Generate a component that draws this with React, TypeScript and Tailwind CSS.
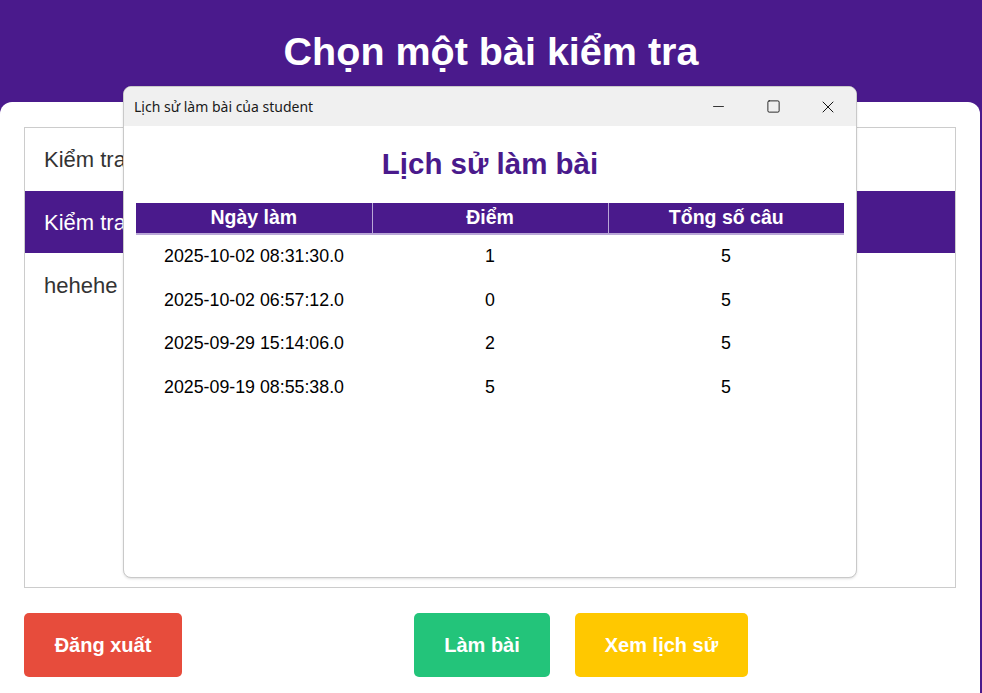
import { Minus, Square, X } from "lucide-react";

const rows = [
  { date: "2025-10-02 08:31:30.0", score: 1, total: 5 },
  { date: "2025-10-02 06:57:12.0", score: 0, total: 5 },
  { date: "2025-09-29 15:14:06.0", score: 2, total: 5 },
  { date: "2025-09-19 08:55:38.0", score: 5, total: 5 },
];

const HistoryDialog = () => {
  return (
    <div className="absolute left-[123px] top-[86px] w-[734px] h-[492px] rounded-[8px] border border-[#c9c9c9] bg-white overflow-hidden shadow-sm">
      {/* Title bar */}
      <div className="flex items-center h-[39px] bg-[#f0f0f0] pl-[10px]">
        <span className="text-[14px] text-[#1a1a1a] font-['Noto_Sans',sans-serif] flex-1">
          Lịch sử làm bài của student
        </span>
        <div className="flex items-center h-full">
          <div className="w-[55px] flex justify-center">
            <Minus size={17} strokeWidth={1.1} className="text-black" />
          </div>
          <div className="w-[55px] flex justify-center">
            <Square size={15} strokeWidth={1.3} className="text-black" />
          </div>
          <div className="w-[55px] flex justify-center pr-[2px]">
            <X size={20} strokeWidth={1.1} className="text-black" />
          </div>
        </div>
      </div>

      {/* Content */}
      <div className="px-[12px]">
        <h2 className="text-center text-[29.5px] font-bold text-[#4a1a8c] mt-[20px] leading-[36px]">
          Lịch sử làm bài
        </h2>
        <table className="w-full mt-[21px] border-collapse table-fixed">
          <thead>
            <tr className="bg-[#4a1a8c] text-white h-[31px] border-b-2 border-[#b9a7d6]">
              <th className="text-[19.5px] font-bold border-r border-[#b9a7d6]">Ngày làm</th>
              <th className="text-[19.5px] font-bold border-r border-[#b9a7d6]">Điểm</th>
              <th className="text-[19.5px] font-bold">Tổng số câu</th>
            </tr>
          </thead>
          <tbody>
            <tr className="h-[1px]">
              <td colSpan={3} />
            </tr>
            {rows.map((r, i) => (
              <tr key={i} className="h-[43.5px] text-[17.8px] text-black">
                <td className="text-center">{r.date}</td>
                <td className="text-center">{r.score}</td>
                <td className="text-center">{r.total}</td>
              </tr>
            ))}
          </tbody>
        </table>
      </div>
    </div>
  );
};

const App = () => {
  return (
    <div className="relative w-[982px] h-[693px] bg-[#4a1a8c] overflow-hidden font-['Liberation_Sans',Arial,sans-serif]">
      {/* Header */}
      <div className="h-[102px] flex items-start justify-center pt-[27px]">
        <h1 className="text-white text-[39.5px] font-bold leading-[48px]">Chọn một bài kiểm tra</h1>
      </div>

      {/* Card */}
      <div className="w-[980px] h-[591px] bg-white rounded-t-[12px] pt-[25px] px-[24px]">
        <div className="w-[932px] h-[461px] border border-[#cccccc]">
          <div className="h-[63px] flex items-center px-[19px] text-[22px] text-[#333]">Kiểm tra</div>
          <div className="h-[62px] flex items-center px-[19px] text-[22px] text-white bg-[#4a1a8c]">Kiểm tra</div>
          <div className="h-[64px] flex items-center px-[19px] text-[22px] text-[#333]">hehehe</div>
        </div>

        {/* Buttons */}
        <div className="flex items-center mt-[25px]">
          <button className="w-[158px] h-[64px] rounded-[5px] bg-[#e74c3c] text-white font-bold text-[20px]">
            Đăng xuất
          </button>
          <button className="ml-[232px] w-[136px] h-[64px] rounded-[5px] bg-[#23c47a] text-white font-bold text-[20px]">
            Làm bài
          </button>
          <button className="ml-[25px] w-[173px] h-[64px] rounded-[5px] bg-[#ffc800] text-white font-bold text-[20px]">
            Xem lịch sử
          </button>
        </div>
      </div>

      <HistoryDialog />
    </div>
  );
};

export default App;
